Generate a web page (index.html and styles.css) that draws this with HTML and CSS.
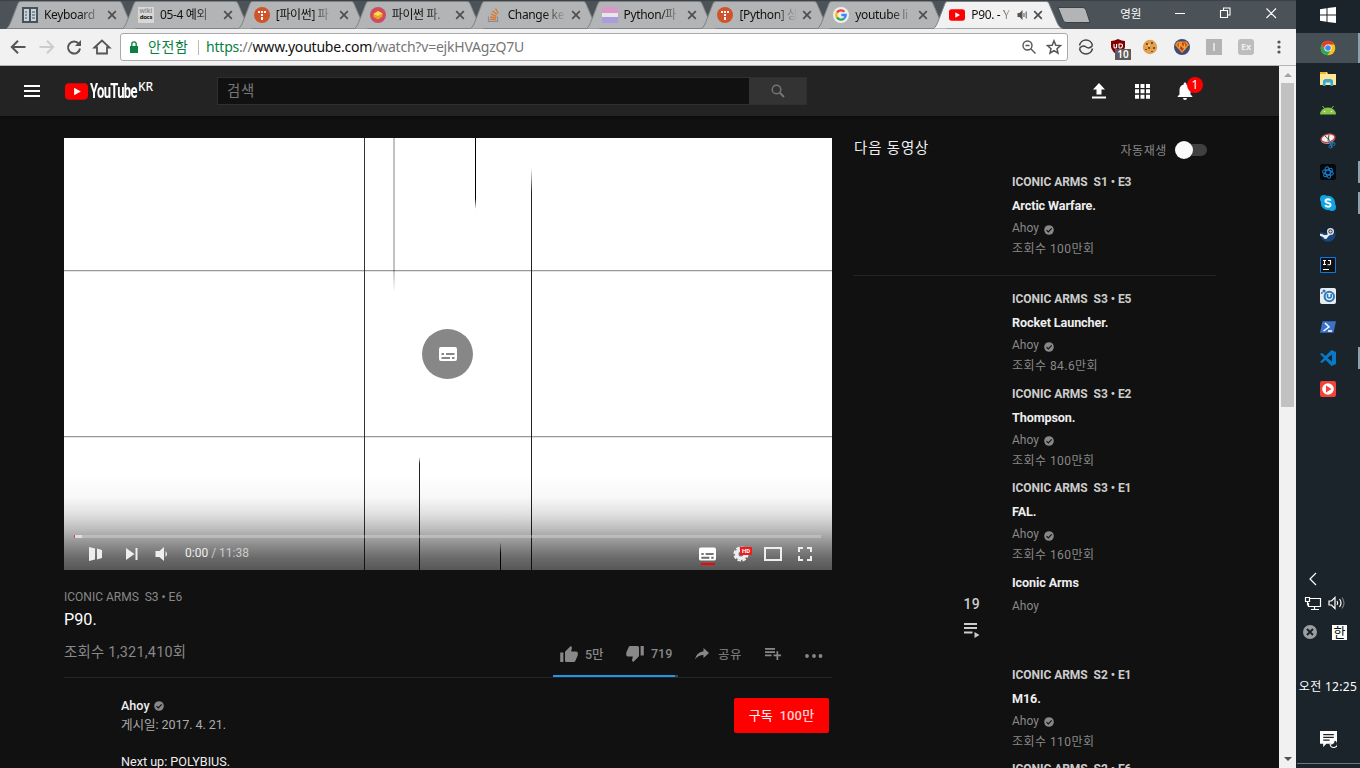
FILE: index.html
```
<!DOCTYPE html>
<html lang="ko">
<head>
<meta charset="utf-8">
<title>P90. - YouTube</title>
<link rel="stylesheet" href="styles.css">
</head>
<body>
<svg class="defs" width="0" height="0">
  <symbol id="tab-shape" viewBox="0 0 130 28" preserveAspectRatio="none"><path d="M0.5 27.500C3 26 4 23 6 18L11 5C12.500 1 13 .5 16 .5H112C115 .5 115.500 1 117 5L123 19C125 24 126 26 129.500 27.500" stroke="#7f8284"/></symbol>
  <symbol id="x" viewBox="0 0 10 10"><path d="M1.200 1.200L8.800 8.800M8.800 1.200L1.200 8.800" stroke="#4d4f51" stroke-width="1.700"/></symbol>
  <symbol id="t-logo" viewBox="0 0 16 16"><circle cx="8" cy="8" r="8" fill="#d0532b"/><path d="M4 4h2v2H4zM7 4h2v2H7zM10 4h2v2h-2zM7 7h2v2H7zM7 10h2v3H7z" fill="#fff"/></symbol>
  <symbol id="yt" viewBox="0 0 24 17"><rect width="24" height="17" rx="4" fill="#f00"/><path d="M9.500 4.500V12.500L16.500 8.500Z" fill="#fff"/></symbol>
  <symbol id="check" viewBox="0 0 10 10"><circle cx="5" cy="5" r="4.800" fill="#888"/><path d="M2.500 5.200L4.300 7L7.700 3.300" fill="none" stroke="#111" stroke-width="1.200"/></symbol>
  <symbol id="cc" viewBox="0 0 18 14"><path fill-rule="evenodd" d="M2 0H16a2 2 0 0 1 2 2V12a2 2 0 0 1-2 2H2a2 2 0 0 1-2-2V2a2 2 0 0 1 2-2ZM2.500 6V8H5V6ZM7 6V8H15.500V6ZM2.500 10V12H11V10ZM13 10V12H15.500V10Z"/></symbol>
  <symbol id="thumb" viewBox="1 1 22 20"><path d="M1 21h4V9H1v12zm22-11c0-1.100-.900-2-2-2h-6.310l.950-4.570.030-.320c0-.410-.170-.790-.440-1.060L14.170 1 7.590 7.590C7.220 7.950 7 8.450 7 9v10c0 1.100.900 2 2 2h9c.830 0 1.540-.500 1.840-1.220l3.020-7.050c.090-.230.140-.470.140-.730v-2z"/></symbol>
</svg>

<div class="desktop">
<div class="browser">
  <div class="tabstrip">
    <div class="tab"><svg class="tab-bg"><use href="#tab-shape"/></svg>
      <svg class="fav" viewBox="0 0 16 16"><rect width="16" height="16" fill="#43525c"/><path d="M2 2h5v12H2zM9 2h5v12H9z" fill="#c9d2d6"/><path d="M3 5h2M3 8h2M3 11h2M10 5h3M10 8h3M10 11h3" stroke="#43525c"/></svg>
      <span class="tab-title">Keyboard</span><svg class="close"><use href="#x"/></svg></div>
    <div class="tab"><svg class="tab-bg"><use href="#tab-shape"/></svg>
      <span class="fav wiki"><i>wiki</i><b>docs</b></span>
      <span class="tab-title">05-4 예외</span><svg class="close"><use href="#x"/></svg></div>
    <div class="tab"><svg class="tab-bg"><use href="#tab-shape"/></svg><svg class="fav"><use href="#t-logo"/></svg>
      <span class="tab-title">[파이썬] 파</span><svg class="close"><use href="#x"/></svg></div>
    <div class="tab"><svg class="tab-bg"><use href="#tab-shape"/></svg>
      <svg class="fav" viewBox="0 0 16 16"><circle cx="8" cy="8" r="8" fill="#cf4b60"/><path d="M3.500 7L8 4L12.500 6.500V9.500L8 12.500L3.500 10Z" fill="#e9a520"/><path d="M3.500 7L8 4L12.500 6.500L8 9Z" fill="#ffd94f"/></svg>
      <span class="tab-title">파이썬 파.</span><svg class="close"><use href="#x"/></svg></div>
    <div class="tab"><svg class="tab-bg"><use href="#tab-shape"/></svg>
      <svg class="fav" viewBox="0 0 16 16" fill="none"><path d="M2.500 9.500V14.500H11.500V9.500" stroke="#8b8d8f" stroke-width="1.200"/><path d="M4 12.500H10M4.200 10L10 10.800M5 7L10.300 9.300M6.500 4L11 7.600M9.500 1.500L12.300 6.500" stroke="#d9772c" stroke-width="1.300"/></svg>
      <span class="tab-title">Change ke</span><svg class="close"><use href="#x"/></svg></div>
    <div class="tab"><svg class="tab-bg"><use href="#tab-shape"/></svg>
      <svg class="fav" viewBox="0 0 16 16"><path d="M0 0h16v6H0z" fill="#d998c8"/><path d="M0 6h16v4H0z" fill="#e6e6e6"/><path d="M0 10h16v6H0z" fill="#ab9cdb"/></svg>
      <span class="tab-title">Python/파</span><svg class="close"><use href="#x"/></svg></div>
    <div class="tab"><svg class="tab-bg"><use href="#tab-shape"/></svg><svg class="fav"><use href="#t-logo"/></svg>
      <span class="tab-title">[Python] 상</span><svg class="close"><use href="#x"/></svg></div>
    <div class="tab"><svg class="tab-bg"><use href="#tab-shape"/></svg>
      <svg class="fav" viewBox="0 0 16 16" fill="none" stroke-width="2.300"><circle cx="8" cy="8" r="8" fill="#eee"/><path d="M11.400 4.800A4.700 4.700 0 0 0 4 5.600" stroke="#ea4335"/><path d="M4 5.500A4.700 4.700 0 0 0 4 10.500" stroke="#fbbc05"/><path d="M4 10.400A4.700 4.700 0 0 0 11 11.600" stroke="#34a853"/><path d="M11 11.600A4.700 4.700 0 0 0 12.700 8H8.300" stroke="#4285f4"/></svg>
      <span class="tab-title">youtube li</span><svg class="close"><use href="#x"/></svg></div>
    <div class="tab active"><svg class="tab-bg"><use href="#tab-shape"/></svg>
      <svg class="fav"><use href="#yt"/></svg>
      <span class="tab-title">P90. - Y</span>
      <svg class="audio" viewBox="0 0 10 10"><path d="M0 3h2l3-3v10L2 7H0z" fill="#555"/><path d="M6.500 3v4M8.700 1.500v7" stroke="#555"/></svg>
      <svg class="close"><use href="#x"/></svg></div>
    <svg class="newtab" viewBox="0 0 34 16"><path d="M1 .5H26Q28 .5 29 3L33 15.500H9Q7 15.500 6 13Z" fill="#b2b4b5" stroke="#3a4247"/></svg>
    <span class="profile">영원</span>
    <svg class="winbtns" viewBox="0 0 102 12" fill="none" stroke="#fff" stroke-width="1.100"><path d="M0 6.500H10M45.500 3.500h7v7h-7zM48.500 3V1h6.500v7h-2M91.500 1.500L101 11M101 1.500L91.500 11"/></svg>
  </div>

  <div class="toolbar">
    <svg class="nav" viewBox="0 0 110 20" fill="none" stroke="#555" stroke-width="2"><path d="M17.500 10H4M10 3.800L3.800 10L10 16.200"/><path d="M31.500 10H45M39 3.800L45.200 10L39 16.200" stroke="#ccc"/><path d="M70.800 6.800A6 6 0 1 0 72 11.500"/><path d="M73 3V9H67Z" fill="#555" stroke="none"/><path d="M86.500 10.500L94 3.500L101.500 10.500H99V16.500H89V10.500Z" stroke-width="1.800"/></svg>
    <div class="omnibox">
      <svg class="lock" viewBox="0 0 8 12"><path d="M0 5h8v7H0z" fill="#0b8043"/><path d="M1.800 5V3a2.200 2.200 0 0 1 4.400 0V5" fill="none" stroke="#0b8043" stroke-width="1.300"/></svg>
      <span class="secure">안전함</span><span class="sep"></span>
      <span class="url"><span class="green">https</span>://<span class="host">www.youtube.com</span>/watch?v=ejkHVAgzQ7U</span>
      <svg class="omni-icons" viewBox="0 0 42 16" fill="none" stroke="#555" stroke-width="1.400"><circle cx="6.500" cy="6.500" r="4.500"/><path d="M10 10L14.500 14.500M4.500 6.500h4"/><path d="M33 1.800L34.800 6.200L39.500 6.600L36 9.700L37 14.200L33 11.700L29 14.200L30 9.700L26.500 6.600L31.200 6.200Z" stroke-width="1.500"/></svg>
    </div>
    <div class="extensions">
      <svg viewBox="0 0 16 16" fill="none" stroke="#444" stroke-width="1.500"><path d="M1.500 6.500A6.600 6.600 0 0 1 14.500 6.500M14.500 9.500A6.600 6.600 0 0 1 1.500 9.500M1.500 9.500Q4.500 5.500 8 8T14.500 6.500"/></svg>
      <span class="ublock"><svg viewBox="0 0 16 16"><path d="M8 0Q12 2 15 2V8Q14 13 8 16Q2 13 1 8V2Q4 2 8 0Z" fill="#800000"/><path d="M4 5v3q0 1 1.300 1t1.300-1V5M9 9V5h2q1.500 0 1.500 1.500T11 9H9" stroke="#fff" fill="none" stroke-width="1.100"/></svg><b>10</b></span>
      <svg viewBox="0 0 16 16"><circle cx="8" cy="8" r="7.200" fill="#e0a052"/><path d="M4 4h2v2H4zM9 3h2v2H9zM6 8h2v2H6zM11 8h2v2h-2zM3 10h2v1H3zM9 12h2v1H9z" fill="#8a4a1d"/><circle cx="7" cy="6" r="1" fill="#f5c782"/></svg>
      <svg viewBox="0 0 16 16"><circle cx="8" cy="8" r="8" fill="#3f4a77"/><path d="M3.500 2.500H12.500L15 6L8 14L1 6Z" fill="#f0962a"/><path d="M4.500 3.500H6L8 6.500V3.500H11.500L13 6L8 12L3 6Z" fill="#b8402a"/><path d="M5.500 9V4.500L10.500 9.500V4.500" fill="none" stroke="#f5a52a" stroke-width="1.500"/></svg>
      <svg viewBox="0 0 16 16"><path d="M0 0h16v16H0z" fill="#b3b3b3"/><path d="M8 4v8" stroke="#eee" stroke-width="1.500"/></svg>
      <span class="ex">Ex</span>
    </div>
    <svg class="kebab" viewBox="0 0 4 14" fill="#555"><circle cx="2" cy="2" r="1.600"/><circle cx="2" cy="7" r="1.600"/><circle cx="2" cy="12" r="1.600"/></svg>
  </div>

  <div class="viewport">
    <div class="page">
      <header class="masthead">
        <svg class="burger" viewBox="0 0 16 12" fill="#fff"><path d="M0 0h16v2H0zM0 5h16v2H0zM0 10h16v2H0z"/></svg>
        <svg class="logo"><use href="#yt"/></svg><span class="wordmark">YouTube</span><sup class="country">KR</sup>
        <div class="search"><span class="query">검색</span><span class="search-btn"><svg viewBox="0 0 14 14" fill="none" stroke="#757575" stroke-width="1.500"><circle cx="5.500" cy="5.500" r="4.300"/><path d="M8.800 8.800L13 13" stroke-width="2"/></svg></span></div>
        <div class="mast-actions">
          <svg viewBox="0 0 16 16" fill="#fff"><path d="M8 0L14 6.500H10.500V11.500H5.500V6.500H2ZM1 13.500h14v2H1z"/></svg>
          <svg viewBox="0 0 16 16" fill="#fff"><path d="M1 1h4v4H1zM6.500 1h4v4h-4zM12 1h4v4h-4zM1 6.300h4v4H1zM6.500 6.300h4v4h-4zM12 6.300h4v4h-4zM1 11.700h4v4H1zM6.500 11.700h4v4h-4zM12 11.700h4v4h-4z"/></svg>
          <span class="bell"><svg viewBox="0 0 16 18" fill="#fff"><path d="M8 18a2 2 0 0 0 2-2H6a2 2 0 0 0 2 2zM13.500 12.500V8q0-4.500-4.200-5.500V1.800a1.300 1.300 0 0 0-2.600 0V2.500Q2.500 3.500 2.500 8V12.500L.7 14.200V15H15.300V14.200Z"/></svg><b>1</b></span>
        </div>
      </header>

      <div class="columns">
        <main class="primary">
          <div class="player">
            <svg class="scene" viewBox="0 0 768 432">
              <defs>
                <linearGradient id="fd" x1="0" y1="0" x2="0" y2="1"><stop offset=".85" stop-color="#000"/><stop offset="1" stop-color="#000" stop-opacity="0"/></linearGradient>
                <linearGradient id="fu" x1="0" y1="0" x2="0" y2="1"><stop offset="0" stop-color="#222" stop-opacity="0"/><stop offset=".06" stop-color="#222"/></linearGradient>
                <linearGradient id="fs" x1="0" y1="0" x2="0" y2="1"><stop offset="0" stop-color="#000" stop-opacity="0"/><stop offset=".4" stop-color="#000"/></linearGradient>
              </defs>
              <path d="M0 0h768v432H0z" fill="#fff"/>
              <path d="M0 132h768v1H0zM0 298h768v1H0z" fill="#999"/><path d="M0 133h768v1H0zM0 299h768v1H0z" fill="#e4e4e4"/>
              <path d="M300 0h1v432h-1z" fill="#333"/>
              <path d="M329 0h2v154h-2z" fill="url(#fd)" opacity=".24"/>
              <path d="M411 0h1v71h-1z" fill="url(#fd)"/>
              <path d="M467 30h1v402h-1z" fill="url(#fu)"/>
              <path d="M355 319h1v113h-1z" fill="url(#fu)"/>
              <path d="M436 404h1v28h-1z" fill="url(#fs)"/>
            </svg>
            <div class="bezel"><svg><use href="#cc"/></svg></div>
            <div class="shade"></div>
            <div class="chrome">
              <div class="progress"><i></i><b></b></div>
              <div class="controls">
                <svg class="play" viewBox="0 0 14 14"><path d="M0 0L6 1.500V12.500L0 14ZM8 1.500L13 3V11L8 12.500Z"/></svg>
                <svg class="next" viewBox="0 0 12 12"><path d="M0 0L8.500 6L0 12ZM9.500 0h2v12h-2z"/></svg>
                <svg class="vol" viewBox="0 0 13 14"><path d="M0 4H4L8.500 0V14L4 10H0ZM10 4Q13 7 10 10Z"/></svg>
                <span class="time">0:00 <span>/ 11:38</span></span>
                <span class="ccbtn"><svg><use href="#cc"/></svg></span>
                <span class="gear"><svg viewBox="0 0 16 16" fill="none"><circle cx="8" cy="8" r="4.300" stroke="#eee" stroke-width="3.600"/><circle cx="8" cy="8" r="6.600" stroke="#eee" stroke-width="2" stroke-dasharray="3.600 1.580"/></svg><b>HD</b></span>
                <svg class="theater" viewBox="0 0 18 14"><path fill-rule="evenodd" d="M0 0h18v14H0zM2 2v10h14V2z"/></svg>
                <svg class="full" viewBox="0 0 14 14"><path d="M0 0h5v2H2v3H0zM9 0h5v5h-2V2H9zM0 9h2v3h3v2H0zM12 9h2v5H9v-2h3z"/></svg>
              </div>
            </div>
          </div>

          <div class="series">ICONIC ARMS&nbsp; S3 • E6</div>
          <h1 class="title">P90.</h1>
          <div class="stats">
            <span class="views">조회수 1,321,410회</span>
            <div class="actions">
              <svg class="up"><use href="#thumb"/></svg><span class="like">5만</span>
              <svg class="down"><use href="#thumb"/></svg><span class="dislike">719</span>
              <svg class="share" viewBox="0 0 14 12"><path d="M8.500 0L14 5L8.500 10V7Q3 7 0 11.500Q1 4.500 8.500 3.200Z"/></svg><span class="sharelabel">공유</span>
              <svg class="add" viewBox="0 0 16 12"><path d="M0 0h10v1.700H0zM0 3.300h10V5H0zM0 6.600h6.500v1.700H0zM11.500 3.300h1.700v3.300H16v1.700h-2.800V12h-1.700V8.300H8.500V6.600h3z"/></svg>
              <svg class="dots" viewBox="0 0 18 4"><circle cx="2" cy="2" r="1.900"/><circle cx="9" cy="2" r="1.900"/><circle cx="15.500" cy="2" r="1.900"/></svg>
            </div>
            <div class="sentiment"></div>
          </div>
          <div class="owner">
            <div class="owner-text">
              <div class="name">Ahoy <svg><use href="#check"/></svg></div>
              <div class="date">게시일: 2017. 4. 21.</div>
              <div class="desc">Next up: POLYBIUS.</div>
            </div>
            <button class="subscribe">구독 <span>100만</span></button>
          </div>
        </main>

        <aside class="related">
          <div class="upnext"><span>다음 동영상</span><label>자동재생</label><i class="toggle"></i></div>
          <div class="item first"><b>ICONIC ARMS&nbsp; S1 • E3</b><b class="ttl">Arctic Warfare.</b><span class="by">Ahoy <svg><use href="#check"/></svg></span><span class="count-line">조회수 100만회</span></div>
          <div class="item"><b>ICONIC ARMS&nbsp; S3 • E5</b><b class="ttl">Rocket Launcher.</b><span class="by">Ahoy <svg><use href="#check"/></svg></span><span class="count-line">조회수 84.6만회</span></div>
          <div class="item"><b>ICONIC ARMS&nbsp; S3 • E2</b><b class="ttl">Thompson.</b><span class="by">Ahoy <svg><use href="#check"/></svg></span><span class="count-line">조회수 100만회</span></div>
          <div class="item"><b>ICONIC ARMS&nbsp; S3 • E1</b><b class="ttl">FAL.</b><span class="by">Ahoy <svg><use href="#check"/></svg></span><span class="count-line">조회수 160만회</span></div>
          <div class="item list"><div class="count"><em>19</em><svg viewBox="0 0 16 15" fill="#ccc"><path d="M0 0h13v2H0zM0 4h13v2H0zM0 8.500h8.500v2H0zM10.500 9L15.500 12L10.500 15z"/></svg></div><div class="list-text"><b class="ttl">Iconic Arms</b><span>Ahoy</span></div></div>
          <div class="item"><b>ICONIC ARMS&nbsp; S2 • E1</b><b class="ttl">M16.</b><span class="by">Ahoy <svg><use href="#check"/></svg></span><span class="count-line">조회수 110만회</span></div>
          <div class="item"><b>ICONIC ARMS&nbsp; S2 • E6</b></div>
        </aside>
      </div>
    </div>
    <div class="scrollbar"><svg viewBox="0 0 8 4"><path d="M0 4L4 0L8 4z" fill="#a3a3a3"/></svg><div class="handle"></div><svg viewBox="0 0 8 4"><path d="M0 0L4 4L8 0z" fill="#505050"/></svg></div>
  </div>
</div>

<nav class="taskbar">
  <div class="slot start"><svg viewBox="0 0 16 16" fill="#fff"><path d="M0 2.200L6.500 1.300V7.500H0zM7.500 1.100L16 0V7.500H7.500zM0 8.500H6.500V14.700L0 13.800zM7.500 8.500H16V16L7.500 14.900z"/></svg></div>
  <div class="slot current"><svg viewBox="0 0 16 16"><circle cx="8" cy="8" r="7.300" fill="#fbc116"/><path d="M1.600 4.500A7.300 7.300 0 0 1 14.400 4.500H8L4.800 9.500Z" fill="#e33b2e"/><path d="M1.600 4.500A7.300 7.300 0 0 0 7.500 15.300L11 10L5 10Z" fill="#2da94f"/><circle cx="8" cy="8" r="3.600" fill="#fff"/><circle cx="8" cy="8" r="2.800" fill="#4285f4"/></svg></div>
  <div class="slot"><svg viewBox="0 0 16 16"><path d="M0 1h7l1 2h8v11H0z" fill="#ffe694"/><path d="M0 1h6v2H0z" fill="#f0b429"/><path d="M3 15V9.500L5 8H11L13 9.500V15H10.500V11.500H5.500V15z" fill="#35a8df"/></svg></div>
  <div class="slot"><svg viewBox="0 0 16 16"><path d="M0 12.500A8 7 0 0 1 16 12.500z" fill="#8bc34a"/><path d="M2.500 4L5 7M13.500 4L11 7" stroke="#8bc34a"/><circle cx="4.500" cy="9.500" r=".8" fill="#fff"/><circle cx="11.500" cy="9.500" r=".8" fill="#fff"/></svg></div>
  <div class="slot"><svg viewBox="0 0 16 16"><ellipse cx="8" cy="6" rx="7.300" ry="4.800" fill="#999" transform="rotate(-14 8 6)"/><ellipse cx="8" cy="5.200" rx="7" ry="4" fill="#f4f4f4" stroke="#c5433d" stroke-width="1.300" transform="rotate(-14 8 5.200)"/><path d="M5 3L10 7.500M9 2L8 8" stroke="#444"/><path d="M8 9l6 1M10 9l2 6" stroke="#2877b5" stroke-width="1.200"/><circle cx="13.500" cy="11" r="1.500" fill="none" stroke="#2877b5"/><circle cx="10.500" cy="13.500" r="1.500" fill="none" stroke="#2877b5"/></svg></div>
  <div class="slot open"><svg viewBox="0 0 16 16"><rect width="16" height="16" rx="2.500" fill="#05070b"/><g fill="none" stroke="#1683d1" stroke-width="1"><ellipse cx="8" cy="8.500" rx="5.500" ry="2.300" transform="rotate(15 8 8.500)"/><ellipse cx="8" cy="8.500" rx="5.800" ry="2.300" transform="rotate(75 8 8.500)"/><ellipse cx="8" cy="8.500" rx="5.500" ry="2.300" transform="rotate(135 8 8.500)"/></g></svg></div>
  <div class="slot open"><svg viewBox="0 0 16 16"><circle cx="8" cy="8" r="7.200" fill="#0ea5e4"/><circle cx="4" cy="4" r="4" fill="#0ea5e4"/><circle cx="12" cy="12" r="4" fill="#0ea5e4"/><path d="M10.700 5.600Q10 4.200 8 4.200Q5.500 4.300 5.500 6Q5.500 7.400 8 7.900Q10.600 8.400 10.600 10Q10.400 11.800 8 11.800Q5.800 11.800 5.200 10" stroke="#fff" stroke-width="1.900" fill="none"/></svg></div>
  <div class="slot"><svg viewBox="0 0 16 16"><circle cx="8" cy="8" r="7.700" fill="#17477e"/><path d="M.5 6A7.700 7.700 0 0 1 15.500 6L14 9z" fill="#162437"/><circle cx="10.500" cy="5.500" r="2.800" fill="none" stroke="#ddd" stroke-width="1.500"/><circle cx="10.500" cy="5.500" r="1.300" fill="#ddd"/><path d="M0 8.500L6 11L9.500 8" fill="none" stroke="#eee" stroke-width="2.200"/><circle cx="5.500" cy="11" r="2" fill="#eee"/></svg></div>
  <div class="slot"><svg viewBox="0 0 16 16"><path d="M.5 .5h15v15H.5z" fill="#111" stroke="#1473e6"/><path d="M3 3.500h3M4.500 3.500v4M3 7.500h3M8 3.500h3M10.500 3.500v3.200q0 1-1.200 1H7.500M3 12.500h6" fill="none" stroke="#fff" stroke-width="1.100"/></svg></div>
  <div class="slot"><svg viewBox="0 0 16 16"><rect width="16" height="16" rx="2" fill="#e9edf0"/><circle cx="9.300" cy="8.500" r="4.700" fill="none" stroke="#2b77be" stroke-width="2"/><path d="M7.500 6v3q2 2 3.700 0v-3" fill="none" stroke="#2b77be" stroke-width="1.600"/><circle cx="4" cy="3" r="1.600" fill="#2b77be"/><circle cx="1.800" cy="5" r="1" fill="#2b77be"/></svg></div>
  <div class="slot"><svg viewBox="0 0 16 16"><path d="M2.500 2.300H16L13.500 13.700H0z" fill="#3d72c9"/><path d="M5 4L9 8L3.500 12M8 12h4" fill="none" stroke="#fff" stroke-width="1.500"/></svg></div>
  <div class="slot open"><svg viewBox="0 0 16 16"><path fill-rule="evenodd" d="M11.500 0L16 2V14L11.500 16L5.500 10L2 13L0 12L4 8L0 4L2 3L5.500 6ZM12 4.500L7.500 8L12 11.500Z" fill="#0879c9"/></svg></div>
  <div class="slot"><svg viewBox="0 0 16 16"><rect width="16" height="16" rx="2" fill="#f44336"/><circle cx="8" cy="8" r="5.800" fill="#fff"/><path d="M6 4.500L11.500 8L6 11.500z" fill="#f44336"/></svg></div>
  <div class="tray">
    <svg class="tray-icons" viewBox="0 0 64 80" fill="none" stroke="#fff" stroke-width="1.200">
      <path d="M20 6L14 12L20 18"/>
      <path d="M14 31.500h10.500v8H12.500V36M15 42.500h8M18.500 40v2M9.500 30.500h4v4h-4zM11.500 34.500v4"/>
      <path d="M33 34v4h2.500l3.500 3.500v-11L35.500 34zM41 34q1.500 2 0 4M43.500 32q3 4 0 8"/><path d="M46 30.500q4 5.500 0 11" stroke="#777"/>
      <circle cx="14" cy="65" r="7" fill="#9b9fa1" stroke="none"/><path d="M11 62L17 68M17 62L11 68" stroke="#1b242b" stroke-width="2"/>
    </svg>
    <span class="ime">한</span>
  </div>
  <div class="clock">오전 12:25</div>
  <svg class="notes" viewBox="0 0 16 16"><path d="M0 0h16v12H6l-3 3v-3H0z" fill="#fff"/><path d="M3 3.500h10M3 6h10M3 8.500h6" stroke="#1b242b" stroke-width="1.200"/><path d="M9.500 12.500A3.500 3.500 0 1 0 13 8.500Q14 12 9.500 12.500z" fill="#1b242b" stroke="#fff"/></svg>
  <div class="peek"></div>
</nav>
</div>
</body>
</html>
```
FILE: styles.css
```
* { box-sizing: border-box; }
body { margin: 0; background: #111; overflow: hidden; }
svg { display: block; flex: none; }
.defs { position: absolute; }
.desktop { display: flex; width: 1360px; height: 768px; overflow: hidden; font-family: "Noto Sans", "Noto Sans CJK KR", sans-serif; }
.browser { width: 1296px; display: flex; flex-direction: column; }

/* tab strip */
.tabstrip { height: 29px; flex: none; display: flex; background: #4b5358; padding-left: 6px; border-top: 1px solid #3a4247; }
.tab { position: relative; width: 130px; height: 28px; flex: none; margin-right: -14.1px; padding: 0 19px 0 16px; display: flex; align-items: center; fill: #b2b4b5; }
.tab-bg { position: absolute; left: 0; top: 0; width: 130px; height: 28px; }
.tab.active { fill: #f2f1f2; z-index: 1; }
.tab > * { position: relative; }
.tab > .tab-bg { position: absolute; }
.fav { width: 16px; height: 16px; flex: none; }
.wiki { background: #d7d7d7; display: flex; flex-direction: column; align-items: center; font-size: 7px; line-height: 7px; color: #777; }
.wiki i { font-style: normal; }
.wiki b { color: #111; font-size: 6px; letter-spacing: -0.3px; }
.tab-title { flex: 1; min-width: 0; margin: 0 3px 0 6px; white-space: nowrap; font-size: 12px; line-height: 20px; letter-spacing: -0.35px; color: #111; -webkit-mask-image: linear-gradient(90deg, #000 36px, transparent 58px); mask-image: linear-gradient(90deg, #000 36px, transparent 58px); }
.close { width: 10px; height: 10px; }
.audio { width: 11px; height: 10px; margin-right: 5px; }
.active { padding-right: 20px; }
.active .tab-title { margin-right: 0; -webkit-mask-image: linear-gradient(90deg, #000 28px, transparent 42px); mask-image: linear-gradient(90deg, #000 28px, transparent 42px); }
.newtab { width: 34px; height: 16px; margin: 6px 0 0 8px; }
.profile { margin: 4px 0 0 29px; width: 55px; font-size: 11.5px; line-height: 18px; color: #fff; }
.winbtns { width: 102px; height: 12px; margin-top: 6px; }

/* toolbar */
.toolbar { height: 37px; flex: none; display: flex; align-items: center; background: #f2f1f2; border-bottom: 1px solid #b4b4b4; padding-left: 8px; }
.nav { width: 110px; height: 20px; }
.omnibox { width: 948px; height: 28px; margin-left: 2px; border: 1px solid #a9a9a9; border-radius: 3px; background: #fff; display: flex; align-items: center; padding-left: 9px; font-size: 14px; line-height: 24px; }
.lock { width: 8px; height: 12px; }
.secure { color: #0b8043; margin-left: 10px; width: 44px; white-space: nowrap; font-size: 14px; letter-spacing: .6px; }
.sep { width: 1px; height: 15px; background: #bbb; margin: 0 7px 0 6px; }
.url { color: #767676; white-space: nowrap; flex: 1; letter-spacing: -0.21px; }
.green { color: #0b8043; }
.host { color: #111; }
.omni-icons { width: 42px; height: 16px; margin-right: 4px; }
.extensions { display: flex; gap: 16px; margin-left: 10px; }
.extensions svg { width: 16px; height: 16px; }
.ublock { position: relative; }
.ublock b { position: absolute; left: 5px; top: 10px; width: 16px; height: 11px; background: #5b5b5b; color: #fff; font-size: 10px; line-height: 11px; text-align: center; font-weight: 600; }
.ex { width: 16px; height: 16px; border-radius: 3px; background: #bdbdbd; color: #eee; font: bold 9px/16px "Noto Sans", sans-serif; text-align: center; }
.kebab { width: 4px; height: 14px; margin-left: 23px; }

/* page */
.viewport { flex: 1; display: flex; min-height: 0; }
.page { width: 1279px; height: 702px; background: #111; overflow: hidden; font-family: Roboto, "Noto Sans CJK KR", sans-serif; }
.masthead { height: 50px; background: #232323; box-shadow: 0 1px 2px #0a0a0a; display: flex; align-items: center; padding: 0 86px 0 24px; }
.burger { width: 16px; height: 12px; }
.logo { width: 23px; height: 17px; margin-left: 25px; }
.wordmark { width: 48px; margin-left: 2px; color: #fff; font: 700 20px/24px Roboto, sans-serif; letter-spacing: -1px; transform: scaleX(.65); transform-origin: 0 50%; white-space: nowrap; }
.country { color: #fff; font: 500 12px/14px "Noto Sans", sans-serif; width: 20px; margin: -8px 0 0 0; }
.search { display: flex; width: 590px; height: 28px; margin-left: 59px; border: 1px solid #2f2f2f; background: #111; }
.query { flex: 1; padding-left: 9px; font-size: 14.4px; line-height: 27px; letter-spacing: .8px; color: #777; }
.search-btn { width: 57px; background: #333; display: flex; align-items: center; justify-content: center; }
.search-btn svg { width: 14px; height: 14px; }
.mast-actions { margin-left: auto; display: flex; align-items: center; gap: 27px; }
.mast-actions svg { width: 16px; height: 16px; }
.bell { position: relative; }
.mast-actions .bell svg { width: 16px; height: 18px; }
.bell b { position: absolute; left: 10px; top: -5px; width: 16px; height: 16px; border-radius: 8px; background: #f00; color: #fff; font: 12px/16px "Noto Sans", sans-serif; text-align: center; }

.columns { display: flex; padding: 22px 0 0 64px; gap: 22px; }
.primary { width: 768px; flex: none; }
.player { position: relative; height: 432px; }
.scene { width: 768px; height: 432px; }
.bezel { position: absolute; left: 358px; top: 191px; width: 51px; height: 50px; border-radius: 50%; background: #878787; display: flex; align-items: center; justify-content: center; fill: #fff; }
.bezel svg { width: 18px; height: 14px; margin-left: 1px; }
.shade { position: absolute; left: 0; right: 0; bottom: 0; height: 96px; background: linear-gradient(rgba(0,0,0,0), rgba(0,0,0,.03) 25%, rgba(0,0,0,.12) 42%, rgba(0,0,0,.26) 57%, rgba(0,0,0,.44) 73%, rgba(0,0,0,.59) 88%, rgba(0,0,0,.66)); }
.chrome { position: absolute; left: 10px; right: 11px; bottom: 0; height: 35px; }
.progress { height: 3px; background: rgba(255,255,255,.25); display: flex; }
.progress i { width: 1px; background: #f33; }
.progress b { width: 7px; background: rgba(255,255,255,.5); }
.controls { height: 32px; padding: 0 9px 0 15px; display: flex; align-items: center; fill: #eee; }
.play { width: 14px; height: 14px; }
.next { width: 12px; height: 12px; margin-left: 23px; }
.vol { width: 14px; height: 14px; margin-left: 17px; }
.time { margin-left: 16px; flex: 1; font-size: 12px; line-height: 16px; color: #eee; padding-bottom: 2px; }
.time span { color: #ccc; }
.ccbtn { height: 14px; position: relative; left: -1px; fill: #fff; }
.ccbtn svg { width: 17px; height: 14px; }
.ccbtn::after { content: ""; position: absolute; left: 2px; top: 16px; width: 14px; height: 2px; background: #f00; }
.gear { position: relative; margin-left: 16px; }
.gear svg { width: 16px; height: 16px; }
.gear b { position: absolute; left: 7px; top: 1px; width: 12px; height: 8px; background: #f01b1b; color: #fff; font: 700 6px/8px Roboto, sans-serif; text-align: center; }
.theater { width: 18px; height: 14px; margin-left: 15px; }
.full { width: 14px; height: 14px; margin-left: 16px; }

.series { margin-top: 18px; font-size: 12px; line-height: 18px; color: #888; white-space: nowrap; }
.title { margin: 3px 0 0; font-size: 16.2px; line-height: 22px; font-weight: 400; color: #fff; }
.stats { position: relative; height: 47px; border-bottom: 1px solid #252525; display: flex; }
.views { font-size: 14.4px; line-height: 22px; margin-top: 11px; color: #888; flex: 1; white-space: nowrap; letter-spacing: .25px; }
.actions { display: flex; align-items: center; height: 22px; margin-top: 12px; padding-right: 9px; fill: #888; color: #888; font-size: 12.5px; line-height: 20px; font-weight: 500; white-space: nowrap; }
.up, .down { width: 18px; height: 16px; }
.down { transform: rotate(180deg); }
.like { margin-left: 7px; width: 41px; padding-top: 2px; }
.dislike { margin-left: 7px; width: 44px; }
.share { width: 14px; height: 12px; }
.sharelabel { margin-left: 9px; width: 47px; padding-top: 2px; letter-spacing: .5px; font-weight: 400; }
.add { width: 16px; height: 12px; }
.dots { width: 18px; height: 4px; margin: 3px 0 0 24px; }
.sentiment { position: absolute; left: 489px; bottom: 0; width: 125px; height: 2px; background: linear-gradient(90deg, #2793e6 122px, #444 122px); }
.owner { display: flex; justify-content: space-between; padding: 18px 3px 0 57px; }
.owner-text { font-size: 12.6px; color: #eee; }
.name { display: flex; align-items: center; gap: 4px; line-height: 20px; font-weight: 500; }
.name svg { width: 10px; height: 10px; }
.date { line-height: 18px; color: #aaa; letter-spacing: -0.1px; }
.desc { margin-top: 18px; line-height: 20px; }
.subscribe { width: 95px; height: 35px; margin-top: 2px; padding: 0; border: 0; border-radius: 2px; background: #f00; color: #fff; font: 400 13px/20px Roboto, "Noto Sans CJK KR", sans-serif; letter-spacing: .2px; }
.subscribe span { margin-left: 3px; color: #ffd0d0; font-weight: 500; }

.related { width: 362px; }
.upnext { display: flex; align-items: center; height: 24px; padding-right: 9px; font-size: 14.4px; color: #eee; }
.upnext span { flex: 1; line-height: 20px; padding-bottom: 3px; letter-spacing: .9px; }
.upnext label { font-size: 12px; color: #888; letter-spacing: .6px; padding-bottom: 1px; }
.toggle { position: relative; width: 31px; height: 12px; margin-left: 9px; border-radius: 6px; background: #404040; }
.toggle::before { content: ""; position: absolute; left: -1px; top: -3px; width: 18px; height: 18px; border-radius: 9px; background: #fafafa; }
.item { height: 94.5px; padding-left: 158px; display: flex; flex-direction: column; font-size: 12px; line-height: 20px; color: #888; white-space: nowrap; }
.item b { line-height: 24px; font-weight: 700; color: #ccc; letter-spacing: -0.04px; }
.item b.ttl { color: #eee; font-size: 12.6px; letter-spacing: -0.1px; }
.by { display: flex; gap: 5px; align-items: center; line-height: 21px; }
.by svg { width: 10px; height: 10px; margin-top: 2px; }
.count-line { letter-spacing: .45px; }
.first { height: 106px; margin: 8px 0 11.4px; border-bottom: 1px solid #252525; }
.list { height: 92px; padding-left: 0; flex-direction: row; }
.count { width: 158px; padding: 22px 32px 0 0; display: flex; flex-direction: column; align-items: flex-end; }
.count em { font: 500 14px/22px Roboto, sans-serif; color: #ccc; letter-spacing: .3px; }
.count svg { width: 16px; height: 15px; margin-top: 8px; }
.list-text { display: flex; flex-direction: column; line-height: 22px; }

.scrollbar { width: 17px; background: #f1f1f1; display: flex; flex-direction: column; align-items: center; padding: 7px 0 7px; }
.scrollbar svg { width: 8px; height: 4px; }
.handle { width: 13px; height: 324px; margin: 6px 0 auto; background: #c1c1c1; }

/* taskbar */
.taskbar { width: 64px; background: #1b242b; display: flex; flex-direction: column; align-items: center; }
.slot { width: 64px; height: 31px; flex: none; display: flex; align-items: center; justify-content: center; position: relative; padding-bottom: 1px; }
.slot svg { width: 16px; height: 16px; }
.start { height: 33px; padding-bottom: 3px; }
.current { background: #474f56; height: 30px; margin-bottom: 1px; padding-bottom: 0; }
.open::after, .current::after { content: ""; position: absolute; right: 0; top: 4px; width: 2px; height: 22px; background: #8c9fac; }
.current::after { top: 0; height: 30px; }
.tray { position: relative; width: 64px; height: 80px; margin-top: 162px; }
.tray-icons { width: 64px; height: 80px; }
.ime { position: absolute; left: 36px; top: 58px; width: 15px; height: 15px; background: #fff; color: #111; font-size: 13px; line-height: 14px; text-align: center; overflow: hidden; }
.clock { margin-top: 31px; width: 64px; text-align: center; color: #fff; font-size: 12px; line-height: 18px; letter-spacing: .3px; white-space: nowrap; }
.notes { width: 17px; height: 17px; margin-top: 35px; }
.peek { width: 63px; height: 1px; margin-top: 15px; background: #70777b; }
```
